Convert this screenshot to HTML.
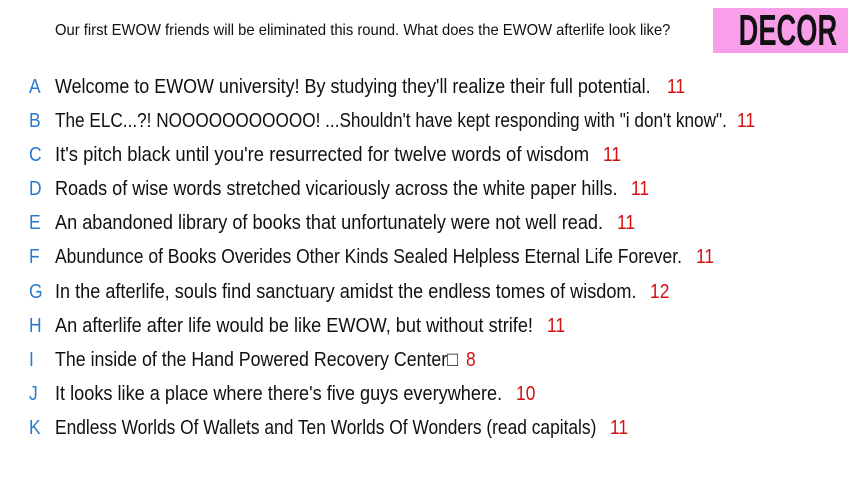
<!DOCTYPE html>
<html><head><meta charset="utf-8"><style>
body{margin:0;width:853px;height:480px;background:#fff;position:relative;overflow:hidden;font-family:"Liberation Sans",sans-serif;color:#111}
.q{position:absolute;left:55px;top:22px;font-size:16px;white-space:nowrap;transform:scaleX(.924);transform-origin:0 0}
.dec{position:absolute;left:713px;top:8px;width:135px;height:45px;background:#f99fe9}
.dec span{position:absolute;left:0;width:135px;text-align:center;top:0;font-size:44px;font-weight:bold;line-height:46px;transform:scaleX(.62);transform-origin:50% 0}
.r{position:absolute;left:0;width:853px;height:26px;font-size:20.5px;white-space:nowrap;line-height:26px}
.l{position:absolute;left:29px;color:#2a78d0;transform:scaleX(.85);transform-origin:0 0}
.t{position:absolute;left:55px;transform-origin:0 0}
.n{position:absolute;color:#d41010;transform:scaleX(.85);transform-origin:0 0}
</style></head><body>
<div class="q">Our first EWOW friends will be eliminated this round. What does the EWOW afterlife look like?</div>
<div class="dec"><span>DECOR</span></div>
<div class="r" style="top:74px"><span class="l">A</span><span class="t" style="transform:scaleX(.874)">Welcome to EWOW university! By studying they'll realize their full potential.</span><span class="n" style="left:667px">11</span></div>
<div class="r" style="top:108px"><span class="l">B</span><span class="t" style="transform:scaleX(.838)">The ELC...?! NOOOOOOOOOOO! ...Shouldn't have kept responding with "i don't know".</span><span class="n" style="left:737px">11</span></div>
<div class="r" style="top:142px"><span class="l">C</span><span class="t" style="transform:scaleX(.90)">It's pitch black until you're resurrected for twelve words of wisdom</span><span class="n" style="left:603px">11</span></div>
<div class="r" style="top:176px"><span class="l">D</span><span class="t" style="transform:scaleX(.88)">Roads of wise words stretched vicariously across the white paper hills.</span><span class="n" style="left:631px">11</span></div>
<div class="r" style="top:210px"><span class="l">E</span><span class="t" style="transform:scaleX(.884)">An abandoned library of books that unfortunately were not well read.</span><span class="n" style="left:617px">11</span></div>
<div class="r" style="top:244px"><span class="l">F</span><span class="t" style="transform:scaleX(.853)">Abundunce of Books Overides Other Kinds Sealed Helpless Eternal Life Forever.</span><span class="n" style="left:696px">11</span></div>
<div class="r" style="top:279px"><span class="l">G</span><span class="t" style="transform:scaleX(.883)">In the afterlife, souls find sanctuary amidst the endless tomes of wisdom.</span><span class="n" style="left:650px">12</span></div>
<div class="r" style="top:313px"><span class="l">H</span><span class="t" style="transform:scaleX(.885)">An afterlife after life would be like EWOW, but without strife!</span><span class="n" style="left:547px">11</span></div>
<div class="r" style="top:347px"><span class="l">I</span><span class="t" style="transform:scaleX(.867)">The inside of the Hand Powered Recovery Center&#9633;</span><span class="n" style="left:466px">8</span></div>
<div class="r" style="top:381px"><span class="l">J</span><span class="t" style="transform:scaleX(.885)">It looks like a place where there's five guys everywhere.</span><span class="n" style="left:516px">10</span></div>
<div class="r" style="top:415px"><span class="l">K</span><span class="t" style="transform:scaleX(.847)">Endless Worlds Of Wallets and Ten Worlds Of Wonders (read capitals)</span><span class="n" style="left:610px">11</span></div>
</body></html>
